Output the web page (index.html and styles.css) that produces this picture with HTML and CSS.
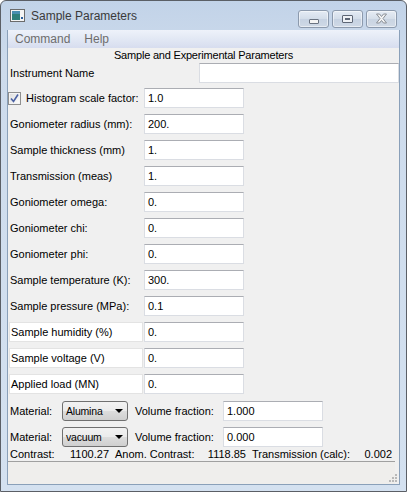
FILE: index.html
```html
<!DOCTYPE html>
<html>
<head>
<meta charset="utf-8">
<title>Sample Parameters</title>
<link rel="stylesheet" href="styles.css">
</head>
<body>
<div class="window">
  <div class="titlebar">
    <svg class="appicon" width="15" height="13" viewBox="0 0 15 13">
      <rect x="0.5" y="0.5" width="14" height="12" fill="#f4f4f4" stroke="#6b6b6b"/>
      <rect x="2" y="2" width="8" height="9" fill="#2f7f7a"/>
      <rect x="2" y="2" width="8" height="3" fill="#4a8fb0"/>
      <rect x="11" y="8" width="2" height="2" fill="#2b5f9e"/>
    </svg>
    <div class="title">Sample Parameters</div>
    <div class="caption-buttons">
      <div class="cbtn"><span class="g-min"></span></div>
      <div class="cbtn"><span class="g-max"></span></div>
      <div class="cbtn cbtn-close">
        <svg width="13" height="11" viewBox="0 0 13 11"><path d="M1.5 1 L4.5 1 L6.5 3.5 L8.5 1 L11.5 1 L8 5.5 L11.5 10 L8.5 10 L6.5 7.5 L4.5 10 L1.5 10 L5 5.5 Z" fill="#f3f3f3" stroke="#8a8f96" stroke-width="1"/></svg>
      </div>
    </div>
  </div>
  <div class="client">
    <div class="menubar"><span class="menu">Command</span><span class="menu">Help</span></div>
    <div class="content">
      <div class="header">Sample and Experimental Parameters</div>
      <div class="row row-inst">
        <div class="label">Instrument Name</div>
        <div class="field field-wide"></div>
      </div>
      <div class="row row-first">
        <div class="label label-check"><span class="checkbox"><svg width="9" height="9" viewBox="0 0 9 9"><path d="M1 4.5 L3.5 7.5 L8 0.5" fill="none" stroke="#4b61a3" stroke-width="1.6"/></svg></span>Histogram scale factor:</div>
        <div class="field">1.0</div>
      </div>
      <div class="row"><div class="label">Goniometer radius (mm):</div><div class="field">200.</div></div>
      <div class="row"><div class="label">Sample thickness (mm)</div><div class="field">1.</div></div>
      <div class="row"><div class="label">Transmission (meas)</div><div class="field">1.</div></div>
      <div class="row"><div class="label">Goniometer omega:</div><div class="field">0.</div></div>
      <div class="row"><div class="label">Goniometer chi:</div><div class="field">0.</div></div>
      <div class="row"><div class="label">Goniometer phi:</div><div class="field">0.</div></div>
      <div class="row"><div class="label">Sample temperature (K):</div><div class="field">300.</div></div>
      <div class="row"><div class="label">Sample pressure (MPa):</div><div class="field">0.1</div></div>
      <div class="row"><div class="label label-box">Sample humidity (%)</div><div class="field">0.</div></div>
      <div class="row"><div class="label label-box">Sample voltage (V)</div><div class="field">0.</div></div>
      <div class="row"><div class="label label-box">Applied load (MN)</div><div class="field">0.</div></div>
      <div class="mat-row mat-first">
        <span class="mat-label">Material:</span>
        <div class="combo"><span>Alumina</span><span class="arrow"></span></div>
        <span class="vf-label">Volume fraction:</span>
        <div class="field">1.000</div>
      </div>
      <div class="mat-row">
        <span class="mat-label">Material:</span>
        <div class="combo"><span>vacuum</span><span class="arrow"></span></div>
        <span class="vf-label">Volume fraction:</span>
        <div class="field">0.000</div>
      </div>
      <div class="contrast">
        <span class="c1">Contrast:</span>
        <span class="c2">1100.27</span>
        <span class="c3">Anom. Contrast:</span>
        <span class="c4">1118.85</span>
        <span class="c5">Transmission (calc):</span>
        <span class="c6">0.002</span>
      </div>
    </div>
    <div class="statusbar">
      <svg class="grip" width="9" height="9" viewBox="0 0 9 9">
        <rect x="6" y="0" width="2" height="2" fill="#b9b9b9"/>
        <rect x="3" y="3" width="2" height="2" fill="#b9b9b9"/>
        <rect x="6" y="3" width="2" height="2" fill="#b9b9b9"/>
        <rect x="0" y="6" width="2" height="2" fill="#b9b9b9"/>
        <rect x="3" y="6" width="2" height="2" fill="#b9b9b9"/>
        <rect x="6" y="6" width="2" height="2" fill="#b9b9b9"/>
      </svg>
    </div>
  </div>
</div>
</body>
</html>
```
FILE: styles.css
```css
html, body {
  margin: 0;
  padding: 0;
  background: #ffffff;
}
.window {
  width: 407px;
  height: 492px;
  box-sizing: border-box;
  border: 1px solid #5b5f66;
  border-radius: 6px 6px 0 0;
  background: linear-gradient(#c2d3e8 0px, #cddbec 60px, #d4e1f0 100%);
  padding: 0 6px 6px 6px;
  display: flex;
  flex-direction: column;
  font-family: "Liberation Sans", Arial, sans-serif;
  font-size: 11px;
  color: #000;
}
.titlebar {
  height: 29px;
  display: flex;
  align-items: center;
  position: relative;
}
.appicon {
  margin-left: 3px;
}
.title {
  margin-left: 6px;
  font-size: 12px;
  color: #3a3a3a;
  margin-top: 1px;
}
.caption-buttons {
  margin-left: auto;
  display: flex;
  gap: 3px;
  margin-right: 3px;
  margin-top: 6px;
}
.cbtn {
  width: 29px;
  height: 16px;
  border: 1px solid #8c9aad;
  border-radius: 3px;
  background: linear-gradient(#e4ebf4, #d3dde9 50%, #c6d2e2 51%, #cfd9e6);
  display: flex;
  align-items: center;
  justify-content: center;
  box-shadow: inset 0 0 0 1px rgba(255,255,255,0.5);
}
.cbtn-close {
  background: linear-gradient(#e6ecf4, #d5dee9 50%, #c9d4e2 51%, #d1dae6);
}
.g-min {
  width: 8px;
  height: 3px;
  border: 1px solid #6a7381;
  border-radius: 1px;
  background: #f4f4f4;
  margin-top: 6px;
}
.g-max {
  width: 9px;
  height: 6px;
  border: 1px solid #5d6675;
  border-radius: 1px;
  background: #eef1f5;
  box-shadow: inset 0 0 0 2px #eef1f5, inset 0 0 0 3px #5d6675;
}
.client {
  flex: 1;
  border: 1px solid #8aa0b9;
  border-top: none;
  background: #f0f0f0;
  display: flex;
  flex-direction: column;
}
.menubar {
  height: 18px;
  background: linear-gradient(#eef2fa, #e2e8f4 50%, #d7ddef);
  display: flex;
  align-items: center;
  font-size: 12px;
  color: #6d6d6d;
  padding-left: 7px;
  gap: 14px;
}
.content {
  flex: 1;
  display: flex;
  flex-direction: column;
}
.header {
  height: 14px;
  line-height: 14px;
  text-align: center;
  font-size: 11px;
  letter-spacing: -0.2px;
}
.row {
  display: flex;
  height: 20px;
  margin-top: 6px;
  align-items: stretch;
}
.row-inst {
  margin-top: 1px;
}
.row-first {
  margin-top: 5px;
}
.label {
  width: 134px;
  margin-left: 1px;
  padding-left: 1px;
  box-sizing: border-box;
  display: flex;
  align-items: center;
  white-space: nowrap;
}
.row-inst .label {
  width: 190px;
}
.label-box {
  background: #ffffff;
  border: 1px solid #e3e3e3;
  padding-left: 1px;
}
.label-check {
  margin-left: 0;
  padding-left: 0;
  width: 135px;
}
.checkbox {
  width: 11px;
  height: 11px;
  border: 1px solid #8f8f8f;
  background: linear-gradient(135deg, #dcdcdc, #ffffff);
  display: inline-flex;
  align-items: center;
  justify-content: center;
  margin-right: 5px;
  box-shadow: inset 0 0 0 1px #f4f4f4;
}
.field {
  width: 100px;
  height: 20px;
  box-sizing: border-box;
  background: #ffffff;
  border: 1px solid #dadde3;
  border-top-color: #abadb3;
  margin-left: 1px;
  padding-left: 3px;
  display: flex;
  align-items: center;
  white-space: nowrap;
}
.field-wide {
  width: 200px;
  margin-left: 0;
}
.mat-row {
  display: flex;
  align-items: center;
  height: 20px;
  margin-top: 6px;
}
.mat-first {
  margin-top: 7px;
}
.mat-label {
  width: 52px;
  padding-left: 2px;
  box-sizing: border-box;
  margin-right: 2px;
}
.combo {
  width: 66px;
  height: 20px;
  box-sizing: border-box;
  border: 1px solid #707070;
  border-radius: 3px;
  background: linear-gradient(#f2f2f2, #ebebeb 50%, #dddddd 51%, #cfcfcf);
  display: flex;
  align-items: center;
  padding-left: 3px;
  font-size: 10.5px;
  letter-spacing: -0.2px;
  position: relative;
}
.arrow {
  position: absolute;
  right: 4px;
  top: 7px;
  width: 0;
  height: 0;
  border-left: 4px solid transparent;
  border-right: 4px solid transparent;
  border-top: 4px solid #000;
}
.vf-label {
  margin-left: 7px;
  width: 87px;
}
.mat-row .field {
  margin-left: 1px;
}
.contrast {
  height: 13px;
  display: flex;
  align-items: center;
  white-space: nowrap;
}
.c1 { margin-left: 2px; width: 52px; }
.c2 { width: 47px; text-align: right; }
.c3 { margin-left: 6px; width: 78px; }
.c4 { width: 53px; text-align: right; }
.c5 { margin-left: 6px; width: 95px; }
.c6 { width: 45px; text-align: right; }
.statusbar {
  height: 23px;
  box-sizing: border-box;
  border-top: 1px solid #a0a0a0;
  margin-right: 4px;
  background: #efeeec;
  position: relative;
}
.grip {
  position: absolute;
  right: -3px;
  bottom: 1px;
}
```
